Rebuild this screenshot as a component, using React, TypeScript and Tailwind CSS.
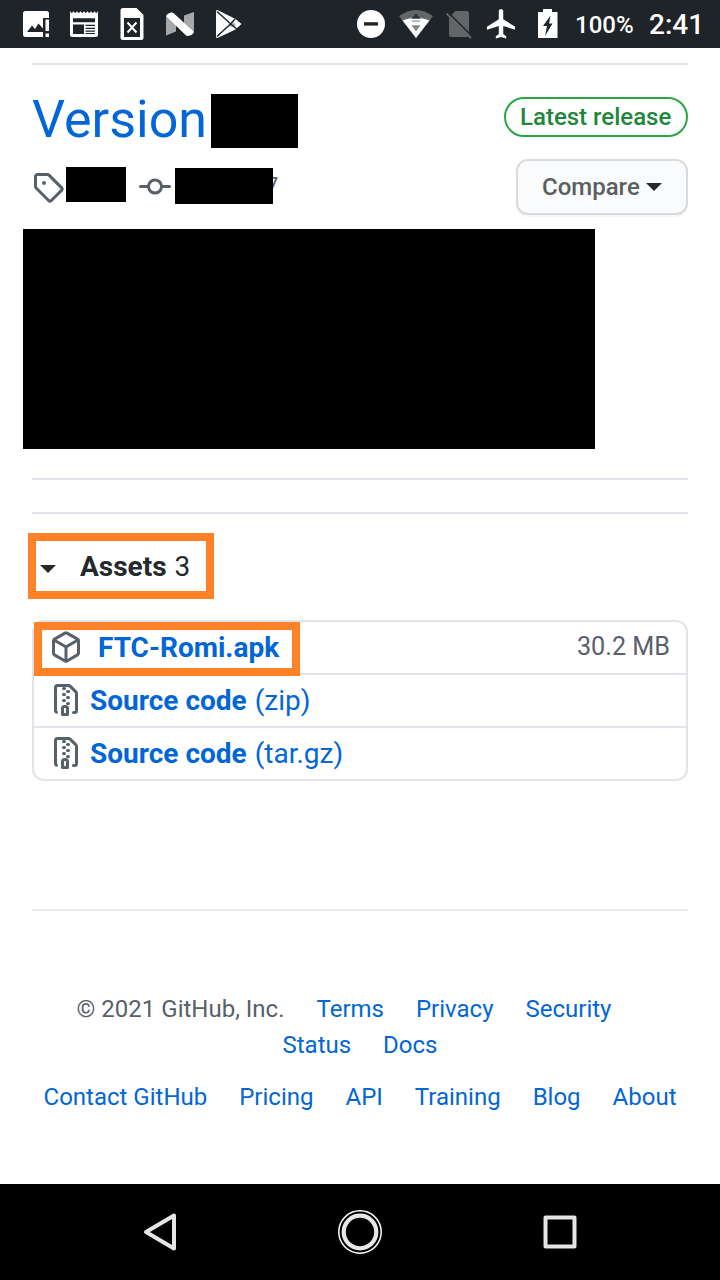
import React from "react";

const PATHS = {
  tag: "M2.5 7.775V2.75a.25.25 0 01.25-.25h5.025a.25.25 0 01.177.073l6.25 6.25a.25.25 0 010 .354l-5.025 5.025a.25.25 0 01-.354 0l-6.25-6.25a.25.25 0 01-.073-.177zm-1.5 0V2.75C1 1.784 1.784 1 2.75 1h5.025c.464 0 .91.184 1.238.513l6.25 6.25a1.75 1.75 0 010 2.474l-5.026 5.026a1.75 1.75 0 01-2.474 0l-6.25-6.25A1.75 1.75 0 011 7.775zM6 5a1 1 0 100 2 1 1 0 000-2z",
  commit:
    "M10.5 7.75a2.5 2.5 0 11-5 0 2.5 2.5 0 015 0zm1.43.75a4.002 4.002 0 01-7.86 0H.75a.75.75 0 110-1.5h3.32a4.001 4.001 0 017.86 0h3.32a.75.75 0 110 1.5h-3.32z",
  pkg: "M8.878.392a1.75 1.75 0 00-1.756 0l-5.25 3.045A1.75 1.75 0 001 4.951v6.098c0 .624.332 1.2.872 1.514l5.25 3.045a1.75 1.75 0 001.756 0l5.25-3.045c.54-.313.872-.89.872-1.514V4.951c0-.624-.332-1.2-.872-1.514L8.878.392zM7.875 1.69a.25.25 0 01.25 0l4.63 2.685L8 7.133 3.245 4.375l4.63-2.685zM2.5 5.677v5.372c0 .09.047.171.125.216l4.625 2.683V8.432L2.5 5.677zm6.25 8.271l4.625-2.683a.25.25 0 00.125-.216V5.677L8.75 8.432v5.516z",
  zip: "M3.5 1.75a.25.25 0 01.25-.25h3a.75.75 0 000 1.5h.5a.75.75 0 000-1.5h2.086a.25.25 0 01.177.073l2.914 2.914a.25.25 0 01.073.177v8.586a.25.25 0 01-.25.25h-.5a.75.75 0 000 1.5h.5A1.75 1.75 0 0014 13.25V4.664c0-.464-.184-.909-.513-1.237L10.573.513A1.75 1.75 0 009.336 0H3.75A1.75 1.75 0 002 1.75v11.5c0 .649.353 1.214.874 1.515a.75.75 0 10.752-1.298.25.25 0 01-.126-.217V1.75zM8.75 3a.75.75 0 000 1.5h.5a.75.75 0 000-1.5h-.5zM6 5.25a.75.75 0 01.75-.75h.5a.75.75 0 010 1.5h-.5A.75.75 0 016 5.25zm2 1.5A.75.75 0 018.75 6h.5a.75.75 0 010 1.5h-.5A.75.75 0 018 6.75zm-1.25.75a.75.75 0 000 1.5h.5a.75.75 0 000-1.5h-.5zM8 9.75A.75.75 0 018.75 9h.5a.75.75 0 010 1.5h-.5A.75.75 0 018 9.75zm-.75.75a1.75 1.75 0 00-1.75 1.75v3c0 .414.336.75.75.75h2.5a.75.75 0 00.75-.75v-3a1.75 1.75 0 00-1.75-1.75h-.5zM7 12.25a.25.25 0 01.25-.25h.5a.25.25 0 01.25.25v2.25H7v-2.25z",
};

function Octicon({ name, className = "" }: { name: keyof typeof PATHS; className?: string }) {
  return (
    <svg viewBox="0 0 16 16" className={`size-8 shrink-0 fill-[#586069] ${className}`}>
      <path fillRule="evenodd" d={PATHS[name]} />
    </svg>
  );
}

function StatusBar() {
  return (
    <header className="flex h-12 items-center bg-[#1f2428] pl-3 text-white">
      <svg viewBox="12 0 48 48" className="size-12" fill="#fff">
        <path d="M25.500 11H46.500Q49 11 49 13.500V18H43V37H25.500Q23 37 23 34.500V13.500Q23 11 25.500 11Z" />
        <path d="M27 32L32 25.500L35 29L38.500 23.500L43 28.500V32Z" fill="#1f2428" />
        <path d="M45.500 19.500H49V31H45.500ZM45.500 33.500H49V37H45.500Z" />
      </svg>
      <svg viewBox="60 0 48 48" className="size-12" fill="#fff">
        <path d="M70 11.300L71.750 13.300L73.500 11.300L75.250 13.300L77 11.300L78.750 13.300L80.500 11.300L82.250 13.300L84 11.300L85.750 13.300L87.500 11.300L89.250 13.300L91 11.300L92.750 13.300L94.500 11.300L96.250 13.300L98 11.300V34.500Q98 37 95.500 37H72.500Q70 37 70 34.500Z" />
        <path d="M73 18.300H95V22.300H73ZM73 24.500H84V34H73ZM85.500 24.700H95V26H85.500ZM85.500 27.700H95V29H85.500ZM85.500 30.500H95V31.700H85.500ZM85.500 33H95V34H85.500Z" fill="#1f2428" />
      </svg>
      <svg viewBox="108 0 48 48" className="size-12" fill="#fff">
        <path d="M123 8H136.500L143.500 15V37.500Q143.500 40 141 40H123Q120.500 40 120.500 37.500V10.500Q120.500 8 123 8Z" />
        <path d="M124 18H140V37H124Z" fill="#1f2428" />
        <path d="M127.500 22.500L136.500 32.500M136.500 22.500L127.500 32.500" stroke="#fff" strokeWidth="2" />
      </svg>
      <svg viewBox="156 0 48 48" className="size-12" fill="#fff">
        <path d="M166 16L176 22V31.500L166 35.500ZM194 12V32L184 26V15.500Z" fill="#a5a7a9" />
        <path d="M166 16C167 14 169 13 171 12.500Q173 12.300 174 13.500L194 32C193 34.500 191 35.500 188 36Q186.500 36 185 34.500Z" />
      </svg>
      <svg viewBox="204 0 48 48" className="size-12" fill="#fff">
        <path d="M216 10.500L217.500 10L235.500 19L241.500 24L235.500 29.500L217.500 38L216 37.500Z" />
        <path d="M217 11.500L230.500 23.800L238.500 30.500M217 36.500L230.500 24L235 19" stroke="#1f2428" strokeWidth="1.500" fill="none" />
        <path d="M229.500 26.500L232.500 21.500L236 25L233 27.500Z" fill="#1f2428" opacity="0.35" />
      </svg>
      <svg viewBox="349 0 44 48" className="ml-[97px] h-12 w-11">
        <circle cx="371" cy="24" r="14" fill="#fff" />
        <path d="M364 22.200H378V25.600H364Z" fill="#1f2428" />
      </svg>
      <svg viewBox="393 0 44 48" className="h-12 w-11">
        <path d="M399 16Q416 4 433 16L416 38Z" fill="#626669" />
        <path d="M402.500 20.500Q407 18.800 411 18.300H421Q425 18.800 429.500 20.500L416 38Z" fill="#fff" />
        <path d="M411.500 18.800L416 13L420.500 18.800Z" fill="#33383b" />
        <path d="M412 20.300H420V21.800H412Z" fill="#a5a7a9" />
        <path d="M411.500 25.200H420.500L416 31.500Z" fill="#85888a" />
      </svg>
      <svg viewBox="437 0 44 48" className="h-12 w-11">
        <path d="M455.500 11H466.500Q469 11 469 13.500V37H451.500Q449 37 449 34.500V17.500Z" fill="#626669" />
        <path d="M448.200 12.500L470 34.300" stroke="#1f2428" strokeWidth="1.500" />
        <path d="M446.500 13.500L471 38" stroke="#626669" strokeWidth="2" />
      </svg>
      <svg viewBox="481 0 44 48" className="h-12 w-11">
        <path transform="translate(484 6) scale(1.48)" fill="#fff" d="M21 16v-2l-8-5V3.500c0-.83-.67-1.500-1.500-1.500S10 2.670 10 3.500V9l-8 5v2l8-2.500V19l-2 1.500V22l3.500-1 3.500 1v-1.500L13 19v-5.500l8 2.500z" />
      </svg>
      <svg viewBox="525 0 44 48" className="h-12 w-11">
        <path d="M543 9H552V12H557.500V38H538V12H543Z" fill="#fff" />
        <path d="M550.500 15.500L543 26H547L545 36L552.500 23.500H549L550.500 15.500Z" fill="#1f2428" />
      </svg>
      <span className="ml-[6px] w-[74px] pt-0.5 text-[24px] leading-8 font-medium">100%</span>
      <span className="pt-0.5 text-[28px] leading-8 font-medium">2:41</span>
    </header>
  );
}

function Redacted({ className }: { className: string }) {
  return <div className={`shrink-0 bg-black ${className}`} />;
}

function ReleaseHeader() {
  return (
    <section className="flex h-[164px] justify-between border-t-2 border-[#e1e4e8]">
      <div className="pt-[29px]">
        <div className="flex h-[54px]">
          <h1 className="w-[179px] text-[52px] leading-[51px] text-[#0366d6]">Version</h1>
          <Redacted className="h-[54px] w-[87px]" />
        </div>
        <div className="mt-[19px] flex items-start">
          <Octicon name="tag" className="mt-1" />
          <Redacted className="ml-[2px] h-[35px] w-[60px]" />
          <Octicon name="commit" className="mt-1 ml-[13px]" />
          <Redacted className="relative z-10 mt-px ml-1 h-9 w-[98px]" />
          <span className="mt-px -ml-[7px] text-[22px] leading-9 text-[#586069]">7</span>
        </div>
      </div>
      <div className="flex flex-col items-end pt-8">
        <span className="flex h-10 w-[184px] items-center rounded-full border-2 border-[#28a745] pl-[14px] text-[24px] leading-9 font-medium whitespace-nowrap text-[#22863a]">
          Latest release
        </span>
        <button className="mt-[22px] flex h-14 w-[172px] items-center rounded-xl border-2 border-[#d9dadc] bg-[#fafbfc] pl-6 text-[24px] font-medium text-[#5c5e61] shadow-[0_2px_0_rgba(27,31,35,0.04)]">
          Compare
          <svg viewBox="0 0 16 8" className="ml-[6px] h-2 w-4 fill-[#24292e]">
            <path d="M0 0H16L8 8Z" />
          </svg>
        </button>
      </div>
    </section>
  );
}

function Assets() {
  return (
    <section className="mt-8 border-t-2 border-[#e1e4e8]">
      <div className="relative mt-[29px] flex h-12 items-center pl-2 text-[28px] leading-[42px] text-[#24292e]">
        <div className="absolute -top-[10px] -left-1 h-[66px] w-[186px] border-8 border-[#ff8229]" />
        <svg viewBox="0 0 16 8" className="mt-1 h-2 w-4 fill-[#24292e]">
          <path d="M0 0H16L8 8Z" />
        </svg>
        <span className="ml-6 font-bold">Assets</span>
        <span className="ml-2">3</span>
      </div>
      <div className="relative mt-[29px] divide-y-2 divide-[#e1e4e8] rounded-xl border-2 border-[#e1e4e8] text-[28px] leading-[50px] text-[#0366d6]">
        <div className="flex h-[53px] items-center pl-4">
          <Octicon name="pkg" className="-mt-px" />
          <a className="ml-4 font-bold">FTC-Romi.apk</a>
          <span className="-mt-px mr-4 ml-auto text-[25.2px] text-[#586069]">30.2 MB</span>
          <div className="absolute top-0 left-0 h-[54px] w-[266px] border-8 border-[#ff8229]" />
        </div>
        <div className="flex h-[53px] items-center pl-4">
          <Octicon name="zip" className="-mt-0.5" />
          <a className="ml-2 font-bold">Source code</a>
          <a className="ml-2">(zip)</a>
        </div>
        <div className="flex h-[51px] items-center pl-4">
          <Octicon name="zip" className="-mt-0.5" />
          <a className="ml-2 font-bold">Source code</a>
          <a className="ml-2">(tar.gz)</a>
        </div>
      </div>
    </section>
  );
}

function Footer() {
  return (
    <footer className="mt-32 border-t-2 border-[#eaecef] pt-20 text-[24px] leading-9 text-[#0366d6]">
      <div className="mr-8 flex justify-center gap-8">
        <span className="text-[#586069]">© 2021 GitHub, Inc.</span>
        <a>Terms</a>
        <a>Privacy</a>
        <a>Security</a>
      </div>
      <div className="flex justify-center gap-8">
        <a>Status</a>
        <a>Docs</a>
      </div>
      <div className="mt-4 flex justify-center gap-8 whitespace-nowrap">
        {["Contact GitHub", "Pricing", "API", "Training", "Blog", "About"].map((label) => (
          <a key={label}>{label}</a>
        ))}
      </div>
    </footer>
  );
}

function NavBar() {
  return (
    <nav className="flex h-24 items-center justify-between bg-black px-[136px]">
      <svg viewBox="136 1208 48 48" className="size-12" fill="none" stroke="#e6e6e6" strokeWidth="4" strokeLinejoin="round">
        <path d="M146 1232L174 1215.500V1248.500Z" />
      </svg>
      <svg viewBox="336 1208 48 48" className="size-12" fill="none">
        <circle cx="360" cy="1232" r="21.200" stroke="#fff" strokeWidth="1.500" />
        <circle cx="360" cy="1232" r="16.300" stroke="#e6e6e6" strokeWidth="4.200" />
      </svg>
      <svg viewBox="536 1208 48 48" className="size-12" fill="none" stroke="#e6e6e6" strokeWidth="4" strokeLinejoin="round">
        <path d="M545.500 1217.500H574.500V1246.500H545.500Z" />
      </svg>
    </nav>
  );
}

export default function App() {
  return (
    <div className="flex h-[1280px] w-[720px] flex-col overflow-hidden bg-white font-['Roboto',sans-serif]">
      <StatusBar />
      <main className="flex-1 px-8 pt-[15px]">
        <ReleaseHeader />
        <Redacted className="mt-[2px] -ml-[9px] h-[220px] w-[572px]" />
        <div className="mt-[29px] h-[2px] bg-[#e1e4e8]" />
        <Assets />
        <Footer />
      </main>
      <NavBar />
    </div>
  );
}
